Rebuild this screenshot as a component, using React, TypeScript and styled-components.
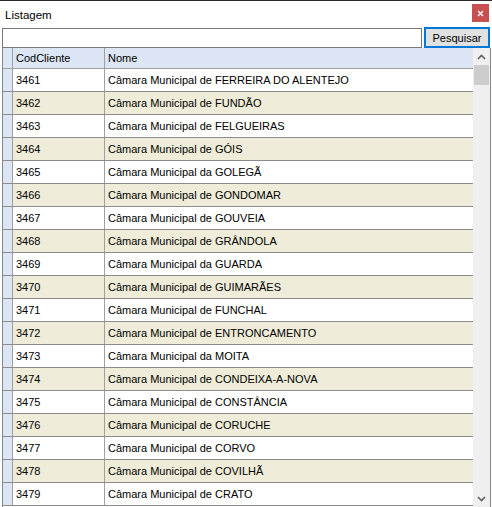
import React from "react";
import styled, { createGlobalStyle } from "styled-components";

type Cliente = {
  cod: number;
  nome: string;
};

const clientes: Cliente[] = [
  { cod: 3461, nome: "Câmara Municipal de FERREIRA DO ALENTEJO" },
  { cod: 3462, nome: "Câmara Municipal de FUNDÃO" },
  { cod: 3463, nome: "Câmara Municipal de FELGUEIRAS" },
  { cod: 3464, nome: "Câmara Municipal de GÓIS" },
  { cod: 3465, nome: "Câmara Municipal da GOLEGÃ" },
  { cod: 3466, nome: "Câmara Municipal de GONDOMAR" },
  { cod: 3467, nome: "Câmara Municipal de GOUVEIA" },
  { cod: 3468, nome: "Câmara Municipal de GRÂNDOLA" },
  { cod: 3469, nome: "Câmara Municipal da GUARDA" },
  { cod: 3470, nome: "Câmara Municipal de GUIMARÃES" },
  { cod: 3471, nome: "Câmara Municipal de FUNCHAL" },
  { cod: 3472, nome: "Câmara Municipal de ENTRONCAMENTO" },
  { cod: 3473, nome: "Câmara Municipal da MOITA" },
  { cod: 3474, nome: "Câmara Municipal de CONDEIXA-A-NOVA" },
  { cod: 3475, nome: "Câmara Municipal de CONSTÂNCIA" },
  { cod: 3476, nome: "Câmara Municipal de CORUCHE" },
  { cod: 3477, nome: "Câmara Municipal de CORVO" },
  { cod: 3478, nome: "Câmara Municipal de COVILHÃ" },
  { cod: 3479, nome: "Câmara Municipal de CRATO" },
];

export default function App() {
  return (
    <>
      <GlobalStyle />
      <Window>
        <TitleBar>
          <Title>Listagem</Title>
          <CloseButton>
            <svg width="7" height="7" viewBox="0 0 7 7">
              <path d="M1 1 L6 6 M6 1 L1 6" stroke="#fff" strokeWidth="1.4" />
            </svg>
          </CloseButton>
        </TitleBar>
        <SearchRow>
          <SearchInput />
          <SearchButton>Pesquisar</SearchButton>
        </SearchRow>
        <Grid>
          <Table>
            <HeaderRow>
              <SelectorCell />
              <CodCell>CodCliente</CodCell>
              <NomeCell>Nome</NomeCell>
            </HeaderRow>
            {clientes.map((c, i) => (
              <Row key={c.cod} $alt={i % 2 === 1}>
                <SelectorCell />
                <CodCell>{c.cod}</CodCell>
                <NomeCell>{c.nome}</NomeCell>
              </Row>
            ))}
          </Table>
          <ScrollBar>
            <Arrow>
              <svg width="9" height="6" viewBox="0 0 9 6">
                <polyline points="1,5 4.5,1.5 8,5" fill="none" stroke="#606060" strokeWidth="1.6" />
              </svg>
            </Arrow>
            <Thumb />
            <Track />
            <Arrow>
              <svg width="9" height="6" viewBox="0 0 9 6">
                <polyline points="1,1 4.5,4.5 8,1" fill="none" stroke="#606060" strokeWidth="1.6" />
              </svg>
            </Arrow>
          </ScrollBar>
        </Grid>
      </Window>
    </>
  );
}

const GlobalStyle = createGlobalStyle`
  html, body {
    margin: 0;
    padding: 0;
    background: #ffffff;
  }
  body {
    font-family: "Liberation Sans", Arial, sans-serif;
    font-size: 11px;
    color: #000;
  }
  * {
    box-sizing: border-box;
  }
`;

const Window = styled.div`
  width: 492px;
  height: 507px;
  display: flex;
  flex-direction: column;
  border-top: 1px solid #2b2b2b;
  overflow: hidden;
  background: #ffffff;
`;

const TitleBar = styled.div`
  height: 26px;
  flex-shrink: 0;
  display: flex;
  align-items: center;
  justify-content: space-between;
  padding: 0 3px 2px 5px;
`;

const Title = styled.div`
  font-size: 11.5px;
  color: #000;
  margin-top: 3px;
`;

const CloseButton = styled.div`
  width: 17px;
  height: 18px;
  background: #c75050;
  display: flex;
  align-items: center;
  justify-content: center;
`;

const SearchRow = styled.div`
  display: flex;
  align-items: center;
  gap: 2px;
  height: 21px;
  flex-shrink: 0;
  padding: 0 2px;
`;

const SearchInput = styled.div`
  flex: 1;
  height: 20px;
  border: 1px solid #7a7a7a;
  background: #fff;
`;

const SearchButton = styled.div`
  width: 66px;
  height: 21px;
  border: 2px solid #0078d7;
  background: #e1e1e1;
  display: flex;
  align-items: center;
  justify-content: center;
  font-size: 11px;
  color: #000;
`;

const Grid = styled.div`
  flex: 1;
  display: flex;
  margin: 0 1px 0 2px;
  border-left: 1px solid #828790;
  border-right: 1px solid #828790;
  overflow: hidden;
`;

const Table = styled.div`
  flex: 1;
  display: flex;
  flex-direction: column;
`;

const HeaderRow = styled.div`
  display: flex;
  height: 21px;
  flex-shrink: 0;
  background: #dce6f4;
  border-bottom: 1px solid #a0a0a0;
`;

const Row = styled.div<{ $alt: boolean }>`
  display: flex;
  height: 23px;
  flex-shrink: 0;
  background: ${(p) => (p.$alt ? "#efedd9" : "#ffffff")};
  border-bottom: 1px solid #8c8c8c;
`;

const SelectorCell = styled.div`
  width: 10px;
  flex-shrink: 0;
  background: #dce6f4;
  border-right: 1px solid #a0a0a0;
`;

const CodCell = styled.div`
  width: 92px;
  flex-shrink: 0;
  padding-left: 3px;
  display: flex;
  align-items: center;
  border-right: 1px solid #a0a0a0;
`;

const NomeCell = styled.div`
  flex: 1;
  padding-left: 3px;
  display: flex;
  align-items: center;
  white-space: nowrap;
`;

const ScrollBar = styled.div`
  width: 17px;
  flex-shrink: 0;
  display: flex;
  flex-direction: column;
  background: #f0f0f0;
`;

const Arrow = styled.div`
  height: 17px;
  display: flex;
  align-items: center;
  justify-content: center;
`;

const Thumb = styled.div`
  height: 20px;
  margin: 0 1px;
  background: #cdcdcd;
`;

const Track = styled.div`
  flex: 1;
`;
